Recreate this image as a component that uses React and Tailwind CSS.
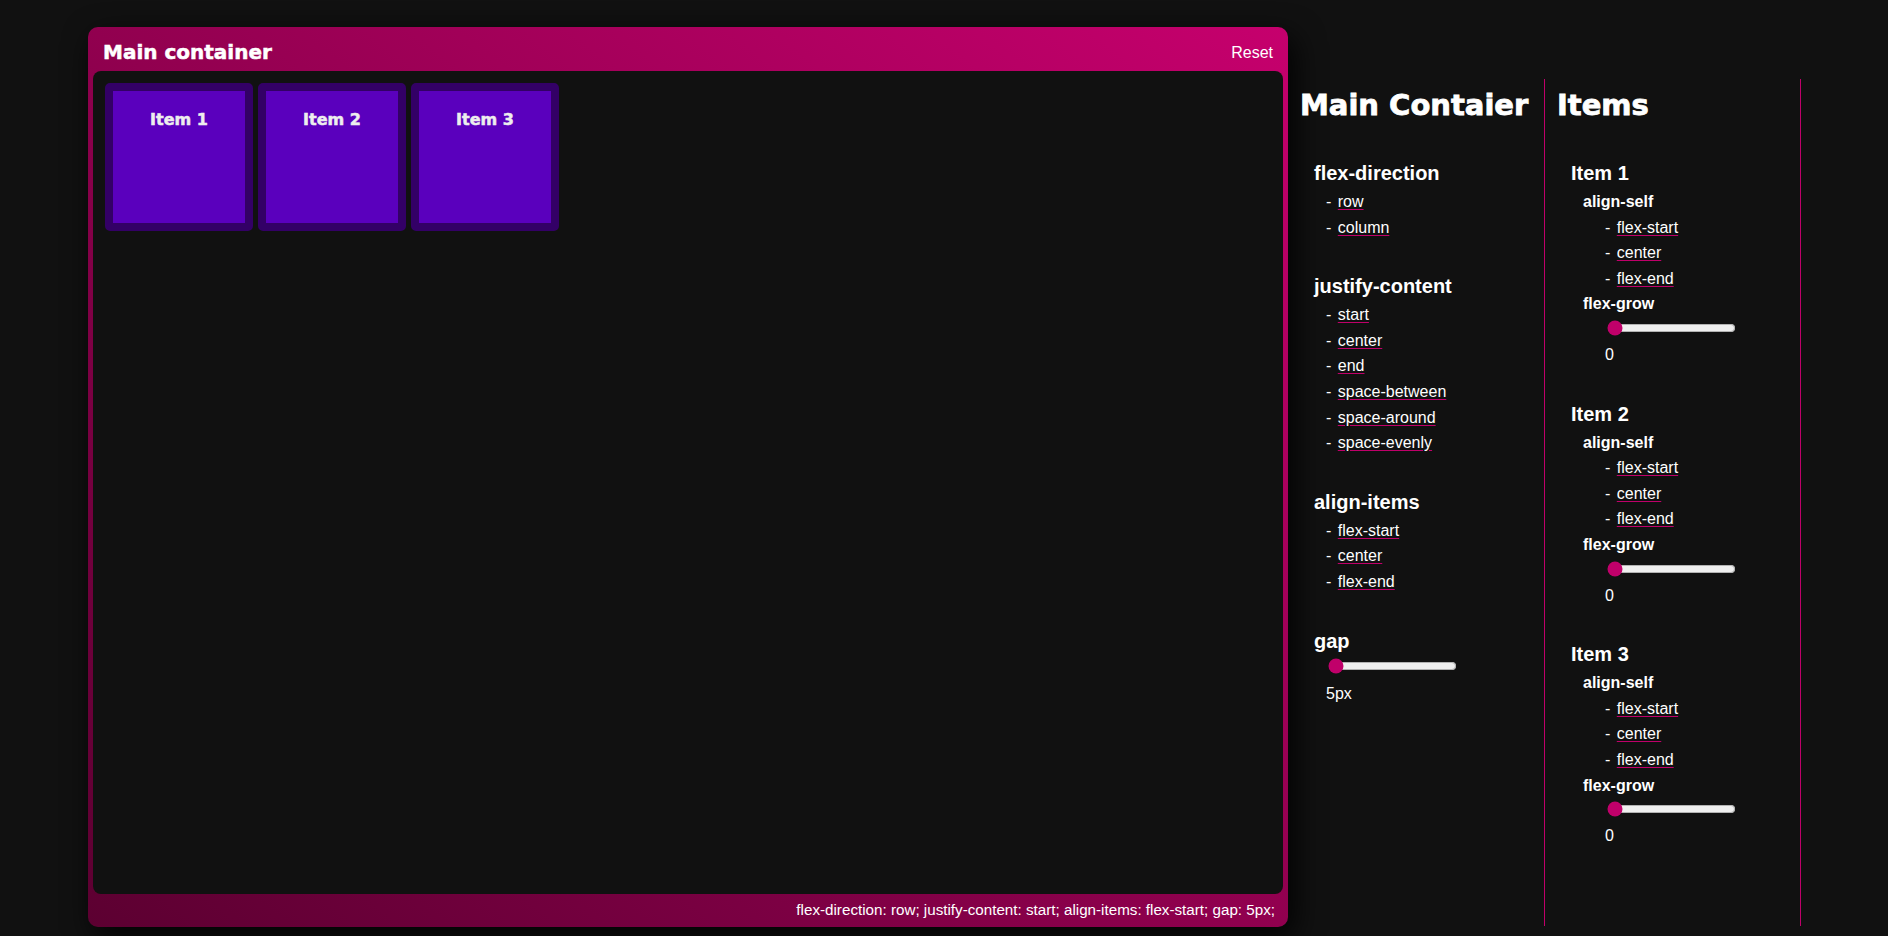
import { useState } from 'react'

const containerOptions = [
  { prop: 'flex-direction', key: 'direction', values: ['row', 'column'] },
  { prop: 'justify-content', key: 'justify', values: ['start', 'center', 'end', 'space-between', 'space-around', 'space-evenly'] },
  { prop: 'align-items', key: 'align', values: ['flex-start', 'center', 'flex-end'] },
]

const alignSelfValues = ['flex-start', 'center', 'flex-end']

const initialContainer = { direction: 'row', justify: 'start', align: 'flex-start', gap: 5 }
const initialItems = [1, 2, 3].map(id => ({ id, alignSelf: 'auto', grow: 0 }))

function OptionLink({ label, onPick }) {
  return (
    <li className="leading-[25.6px] text-[16px]">
      - <a href="#" onClick={(e) => { e.preventDefault(); onPick(label) }}
        className="ml-[2px] underline decoration-[#c0006a] underline-offset-[2px]">{label}</a>
    </li>
  )
}

function Slider({ value, min, max, onChange }) {
  return (
    <input type="range" min={min} max={max} value={value} onChange={(e) => onChange(Number(e.target.value))}
      className="block mx-[2px] my-[3px] w-[129px] h-4 accent-[#c0006a]" />
  )
}

export default function App() {
  const [box, setBox] = useState(initialContainer)
  const [items, setItems] = useState(initialItems)

  const updateItem = (id, patch) => setItems(prev => prev.map(it => it.id === id ? { ...it, ...patch } : it))
  const reset = () => { setBox(initialContainer); setItems(initialItems) }

  return (
    <div className="min-h-screen bg-[#111] flex pl-[88px] pt-[27px] text-white font-['Liberation_Sans',Arial,sans-serif]">
      {/* main container */}
      <div className="w-[1200px] h-[900px] shrink-0 flex flex-col px-[5px] rounded-[10px] bg-[linear-gradient(to_top_right,#5c0031,#c6006d)] shadow-[6px_10px_30px_rgba(0,0,0,0.9)]">
        <div className="h-[44px] flex items-center justify-between px-[10px] pt-[6px]">
          <h2 className="font-['DejaVu_Sans',sans-serif] font-bold text-[20px] leading-6 [-webkit-text-stroke:0.5px_white]">Main container</h2>
          <button type="button" onClick={reset} className="text-[16px] leading-6 pt-[1px]">Reset</button>
        </div>
        <div className="flex-1 bg-[#111] rounded-[8px] p-3 flex"
          style={{ flexDirection: box.direction, justifyContent: box.justify, alignItems: box.align, gap: `${box.gap}px` }}>
          {items.map(it => (
            <div key={it.id} className="w-[148px] h-[148px] border-8 border-[#330066] rounded-[5px] bg-[#5a00bd]"
              style={{ alignSelf: it.alignSelf, flexGrow: it.grow }}>
              <h3 className="text-center pt-[17px] leading-6 font-['DejaVu_Sans',sans-serif] font-bold text-[16px] text-[#eee] [-webkit-text-stroke:0.5px_#eee]">Item {it.id}</h3>
            </div>
          ))}
        </div>
        <div className="h-[33px] flex items-center justify-end pr-[8px] text-[15.2px]">
          flex-direction: {box.direction}; justify-content: {box.justify}; align-items: {box.align}; gap: {box.gap}px;
        </div>
      </div>

      {/* container controls */}
      <div className="w-[257px] shrink-0 mt-[52px] h-[847px] border-r border-[#c0006a] pt-2">
        <h1 className="pl-3 h-9 leading-9 font-['DejaVu_Sans',sans-serif] font-bold text-[29px] whitespace-nowrap [-webkit-text-stroke:0.8px_white]">Main Contaier</h1>
        <div className="mt-[38px] pl-[26px] flex flex-col gap-[34px]">
          {containerOptions.map(opt => (
            <section key={opt.prop}>
              <h3 className="text-[20px] font-bold leading-6">{opt.prop}</h3>
              <ul className="mt-1 pl-3">
                {opt.values.map(v => (
                  <OptionLink key={v} label={v} onPick={(val) => setBox(prev => ({ ...prev, [opt.key]: val }))} />
                ))}
              </ul>
            </section>
          ))}
          <section>
            <h3 className="text-[20px] font-bold leading-6">gap</h3>
            <div className="mt-[5px] pl-3">
              <Slider value={box.gap} min={5} max={50} onChange={(v) => setBox(prev => ({ ...prev, gap: v }))} />
              <p className="mt-[7px] leading-[25.6px] text-[16px]">{box.gap}px</p>
            </div>
          </section>
        </div>
      </div>

      {/* item controls */}
      <div className="w-[256px] shrink-0 mt-[52px] h-[847px] border-r border-[#c0006a] pt-2">
        <h1 className="pl-3 h-9 leading-9 font-['DejaVu_Sans',sans-serif] font-bold text-[29px] whitespace-nowrap [-webkit-text-stroke:0.8px_white]">Items</h1>
        <div className="mt-[38px] pl-[26px] flex flex-col gap-[34px]">
          {items.map(it => (
            <section key={it.id}>
              <h3 className="text-[20px] font-bold leading-6">Item {it.id}</h3>
              <div className="mt-1 pl-3">
                <p className="font-bold text-[16px] leading-[25.6px]">align-self</p>
                <ul className="pl-[22px]">
                  {alignSelfValues.map(v => (
                    <OptionLink key={v} label={v} onPick={(val) => updateItem(it.id, { alignSelf: val })} />
                  ))}
                </ul>
                <p className="font-bold text-[16px] leading-[25.6px]">flex-grow</p>
                <div className="pl-[22px]">
                  <Slider value={it.grow} min={0} max={5} onChange={(v) => updateItem(it.id, { grow: v })} />
                  <p className="mt-[6px] leading-[25.6px] text-[16px]">{it.grow}</p>
                </div>
              </div>
            </section>
          ))}
        </div>
      </div>
    </div>
  )
}
